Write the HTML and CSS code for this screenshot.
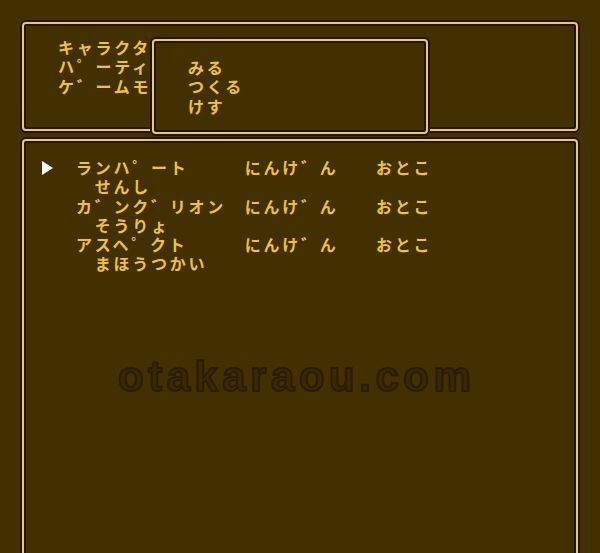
FILE: index.html
```html
<!DOCTYPE html>
<html lang="ja">
<head>
    <meta charset="UTF-8">
    <meta name="viewport" content="width=device-width, initial-scale=1.0">
    <title>ぼうけんしゃ とうろく</title>
    <link rel="stylesheet" href="styles.css">
</head>
<body>
    <div class="screen">
        <section class="panel main-menu">
            <ul class="menu">
                <li>キャラクタ</li>
                <li>ハ゜ーティ</li>
                <li>ケ゛ームモ</li>
            </ul>
            <ul class="panel submenu">
                <li>みる</li>
                <li>つくる</li>
                <li>けす</li>
            </ul>
        </section>

        <section class="panel roster">
            <div class="member">
                <span class="cursor">
                    <svg width="12" height="14" viewBox="0 0 12 14"><polygon points="0,0 11,7 0,14" fill="#fff"/></svg>
                </span>
                <span class="name">ランハ゜ート</span>
                <span class="race">にんけ゛ん</span>
                <span class="sex">おとこ</span>
                <span class="job">せんし</span>
            </div>
            <div class="member">
                <span class="cursor"></span>
                <span class="name">カ゛ンク゛リオン</span>
                <span class="race">にんけ゛ん</span>
                <span class="sex">おとこ</span>
                <span class="job">そうりょ</span>
            </div>
            <div class="member">
                <span class="cursor"></span>
                <span class="name">アスヘ゜クト</span>
                <span class="race">にんけ゛ん</span>
                <span class="sex">おとこ</span>
                <span class="job">まほうつかい</span>
            </div>

            <div class="watermark">otakaraou.com</div>
        </section>
    </div>
</body>
</html>
```

FILE: styles.css
```css
* {
    margin: 0;
    padding: 0;
    box-sizing: border-box;
}

body {
    background-color: #423000;
    font-family: "Noto Sans CJK JP", sans-serif;
    font-weight: 700;
    font-size: 16px;
    letter-spacing: 2.75px;
    color: #f0c040;
    height: 553px;
    overflow: hidden;
}

ul {
    list-style: none;
}

.screen {
    padding: 22px 22px 0;
    display: flex;
    flex-direction: column;
    gap: 8px;
}

/* window frame: dark ring, gold line, dark ring */
.panel {
    border: 2px solid #ecc868;
    border-radius: 4px;
    background-color: #423000;
    box-shadow: 0 0 0 2px #1e1400, inset 0 0 0 2px #1e1400;
}

.main-menu {
    position: relative;
    height: 109px;
    padding: 14px 0 0 34px;
}

.menu li,
.submenu li {
    line-height: 19.25px;
    white-space: nowrap;
}

.submenu {
    position: absolute;
    left: 128px;
    top: 15px;
    width: 276px;
    height: 95px;
    padding: 17px 0 0 34px;
}

.roster {
    position: relative;
    height: 440px;
    padding: 17px 0 0 18px;
}

.member {
    display: grid;
    grid-template-columns: 34px 168.75px 131.25px auto;
    grid-auto-rows: 19.25px;
    line-height: 19.25px;
    white-space: nowrap;
}

.cursor {
    display: flex;
    align-items: center;
}

.job {
    grid-column: 2 / -1;
    padding-left: 18.75px;
}

.watermark {
    position: absolute;
    left: 94px;
    top: 215px;
    font-family: "Liberation Sans", Arial, sans-serif;
    font-size: 42px;
    line-height: 1;
    letter-spacing: 4.5px;
    color: #3a2900;
    -webkit-text-stroke: 2px #2a1c00;
    filter: blur(0.5px);
}
```
